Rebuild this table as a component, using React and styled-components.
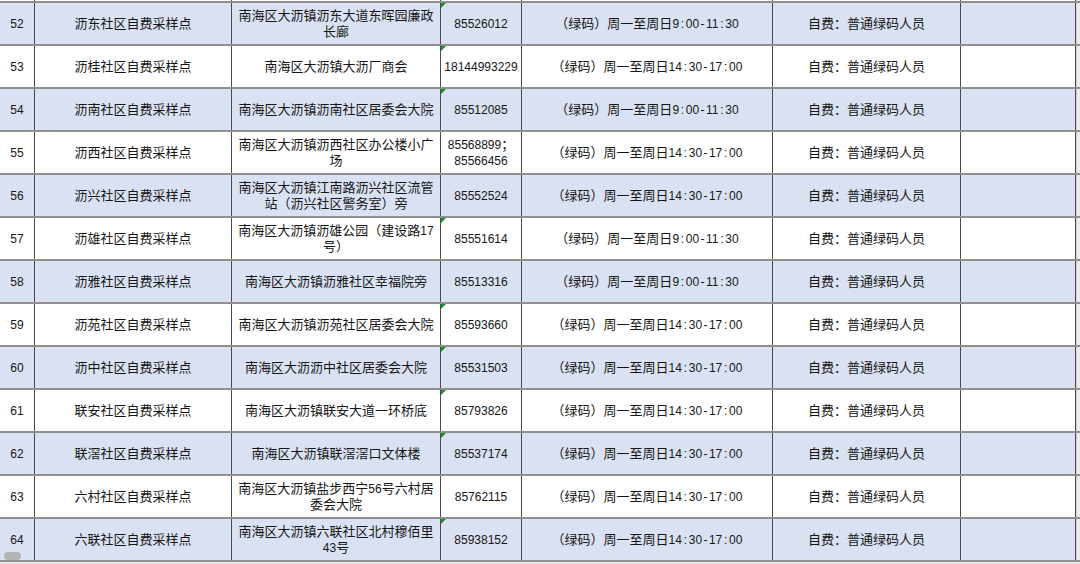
import React from 'react';
import styled, { createGlobalStyle } from 'styled-components';

const GlobalStyle = createGlobalStyle`
  html, body {
    margin: 0;
    padding: 0;
    background: #ffffff;
  }
  body {
    font-family: "Liberation Sans", "Noto Sans CJK SC", sans-serif;
    color: #222;
  }
`;

const COLS = '35px 197px 209px 81px 251px 188px 115px 4px';

const rows = [
  { no: 52, name: '沥东社区自费采样点', addr: '南海区大沥镇沥东大道东晖园廉政\n长廊', tel: '85526012', time: '（绿码）周一至周日9:00-11:30', mark: true },
  { no: 53, name: '沥桂社区自费采样点', addr: '南海区大沥镇大沥厂商会', tel: '18144993229', time: '（绿码）周一至周日14:30-17:00', mark: true },
  { no: 54, name: '沥南社区自费采样点', addr: '南海区大沥镇沥南社区居委会大院', tel: '85512085', time: '（绿码）周一至周日9:00-11:30', mark: true },
  { no: 55, name: '沥西社区自费采样点', addr: '南海区大沥镇沥西社区办公楼小广\n场', tel: '85568899；\n85566456', time: '（绿码）周一至周日14:30-17:00', mark: false },
  { no: 56, name: '沥兴社区自费采样点', addr: '南海区大沥镇江南路沥兴社区流管\n站（沥兴社区警务室）旁', tel: '85552524', time: '（绿码）周一至周日14:30-17:00', mark: false },
  { no: 57, name: '沥雄社区自费采样点', addr: '南海区大沥镇沥雄公园（建设路17\n号）', tel: '85551614', time: '（绿码）周一至周日9:00-11:30', mark: true },
  { no: 58, name: '沥雅社区自费采样点', addr: '南海区大沥镇沥雅社区幸福院旁', tel: '85513316', time: '（绿码）周一至周日9:00-11:30', mark: false },
  { no: 59, name: '沥苑社区自费采样点', addr: '南海区大沥镇沥苑社区居委会大院', tel: '85593660', time: '（绿码）周一至周日14:30-17:00', mark: true },
  { no: 60, name: '沥中社区自费采样点', addr: '南海区大沥沥中社区居委会大院', tel: '85531503', time: '（绿码）周一至周日14:30-17:00', mark: true },
  { no: 61, name: '联安社区自费采样点', addr: '南海区大沥镇联安大道一环桥底', tel: '85793826', time: '（绿码）周一至周日14:30-17:00', mark: true },
  { no: 62, name: '联滘社区自费采样点', addr: '南海区大沥镇联滘滘口文体楼', tel: '85537174', time: '（绿码）周一至周日14:30-17:00', mark: true },
  { no: 63, name: '六村社区自费采样点', addr: '南海区大沥镇盐步西宁56号六村居\n委会大院', tel: '85762115', time: '（绿码）周一至周日14:30-17:00', mark: false },
  { no: 64, name: '六联社区自费采样点', addr: '南海区大沥镇六联社区北村穆佰里\n43号', tel: '85938152', time: '（绿码）周一至周日14:30-17:00', mark: true },
];

const Sheet = styled.div`
  position: relative;
  width: 1080px;
  height: 564px;
  overflow: hidden;
  background: #e9e9e9;
`;

const Row = styled.div`
  display: grid;
  grid-template-columns: ${COLS};
  height: ${(p) => p.$h}px;
  border-bottom: 2px solid #8f8f8f;
  background: ${(p) => (p.$blue ? '#d9e1f2' : '#ffffff')};
`;

const Cell = styled.div`
  position: relative;
  display: flex;
  align-items: center;
  justify-content: center;
  padding: 0 2px;
  border-right: 1px solid #4a4a4a;
  overflow: hidden;

  ${(p) =>
    p.$mark &&
    `
    &::before {
      content: '';
      position: absolute;
      top: 0;
      left: 0;
      border-top: 5px solid #1f8c2a;
      border-right: 5px solid transparent;
    }
  `}
`;

const Text = styled.span`
  display: block;
  text-align: center;
  font-size: 13px;
  line-height: 16px;
  white-space: pre-line;
  color: #161616;
`;

const Gutter = styled.div`
  background: #ececec;
  border-left: 1px solid #d0d0d0;
`;

const Latin = styled.span`
  font-size: 12px;
`;

/* colons and dashes in the times sit in a digit-wide slot */
const Punct = styled.span`
  display: inline-block;
  width: 6.8px;
  text-align: center;
  font-size: 12px;
`;

const Pill = styled.div`
  position: absolute;
  left: 4px;
  top: 552px;
  width: 17px;
  height: 8px;
  border-radius: 4px;
  background: #b4b4b4;
`;

function Mixed({ text }) {
  const parts = text.split(/([0-9A-Za-z.]+|[:\-])/);
  return (
    <Text>
      {parts.map((s, i) => {
        if (s === ':' || s === '-') return <Punct key={i}>{s}</Punct>;
        if (/^[0-9A-Za-z.]+$/.test(s)) return <Latin key={i}>{s}</Latin>;
        return <React.Fragment key={i}>{s}</React.Fragment>;
      })}
    </Text>
  );
}

function DataRow({ r }) {
  return (
    <Row $h={41} $blue={r.no % 2 === 0}>
      <Cell><Mixed text={String(r.no)} /></Cell>
      <Cell><Mixed text={r.name} /></Cell>
      <Cell><Mixed text={r.addr} /></Cell>
      <Cell $mark={r.mark}><Mixed text={r.tel} /></Cell>
      <Cell><Mixed text={r.time} /></Cell>
      <Cell><Mixed text="自费：普通绿码人员" /></Cell>
      <Cell />
      <Gutter />
    </Row>
  );
}

export default function App() {
  return (
    <>
      <GlobalStyle />
      <Sheet>
        <Row $h={1}>
          <Cell /><Cell /><Cell /><Cell /><Cell /><Cell /><Cell /><Gutter />
        </Row>
        {rows.map((r) => (
          <DataRow key={r.no} r={r} />
        ))}
        <Pill />
      </Sheet>
    </>
  );
}
